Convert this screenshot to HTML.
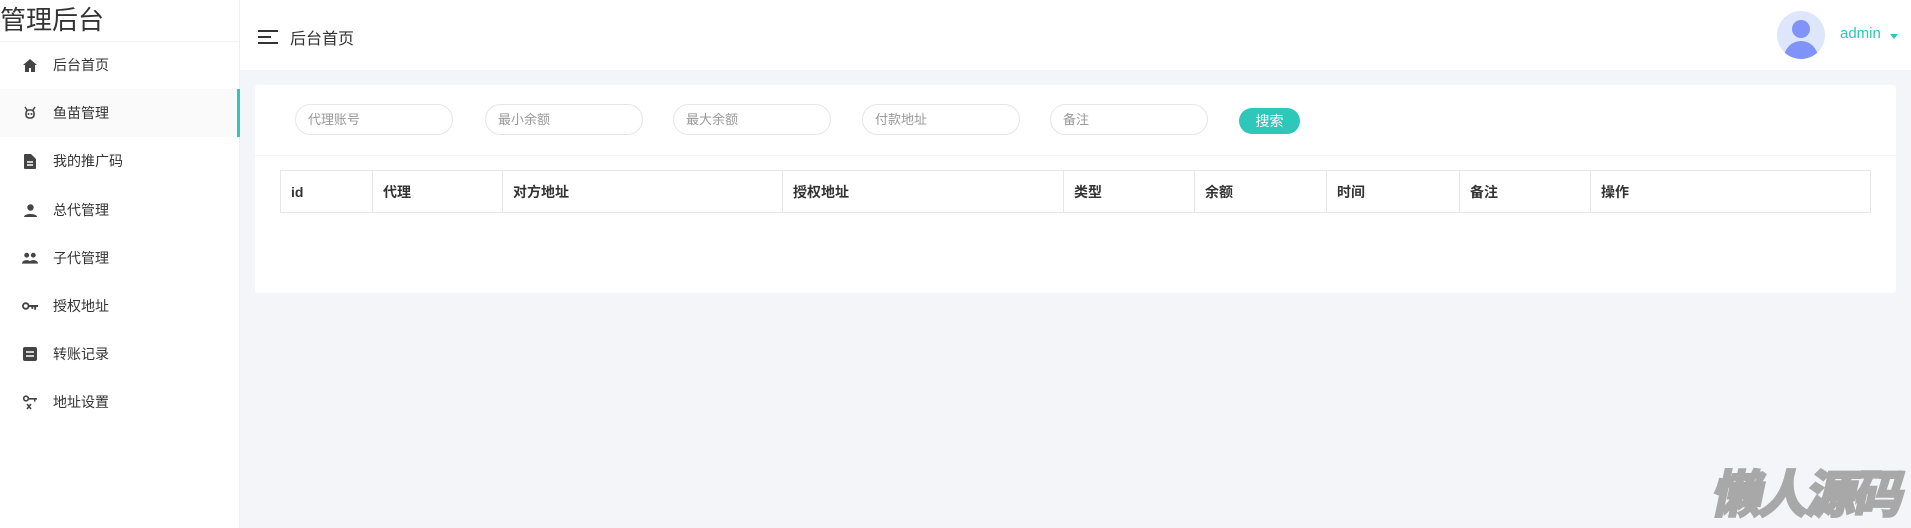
<!DOCTYPE html>
<html><head><meta charset="utf-8"><style>
*{margin:0;padding:0;box-sizing:border-box}
body{width:1911px;height:528px;overflow:hidden;background:#f4f5f9;font-family:"Liberation Sans","Noto Sans CJK SC",sans-serif;position:relative;color:#333}
.side{position:absolute;left:0;top:0;width:240px;height:528px;background:#fff;border-right:1px solid #eee}
.logo{height:42px;font-size:26px;line-height:40px;color:#333;border-bottom:1px solid #f2f2f2}
.item{position:absolute;left:0;width:240px;height:48px;display:flex;align-items:center;font-size:14px;color:#333}
.item .ic{width:16px;height:16px;margin-left:22px;margin-right:15px;display:flex;align-items:center;justify-content:center}
.item.act{background:#fafafa;border-right:3px solid #2ec7b9}
.head{position:absolute;left:240px;top:0;right:0;height:70px;background:#fff}
.card{position:absolute;left:255px;top:85px;width:1641px;height:208px;background:#fff;border-radius:3px}
.inp{position:absolute;top:19px;width:158px;height:31px;border:1px solid #e6e6e6;border-radius:16px;font-size:13px;color:#999;line-height:29px;padding-left:12px}
.btn{position:absolute;left:984px;top:23px;width:61px;height:26px;background:#2ec7b9;border-radius:13px;color:#fff;font-size:14px;line-height:26px;text-align:center}
table{position:absolute;left:25px;top:85px;border-collapse:collapse;width:1591px}
td{border:1px solid #e6e6e6;height:42px;font-size:14px;font-weight:bold;padding-left:10px;color:#333}
</style></head><body>
<div class="side">
<div class="logo">管理后台</div>
<div class="item" style="top:41px"><span class="ic"><svg width="14" height="13" viewBox="0 0 14 13"><path d="M7 0L0 6h2v7h4V9h2v4h4V6h2z" fill="#444"/></svg></span>后台首页</div>
<div class="item act" style="top:89px"><span class="ic"><svg width="14" height="14" viewBox="0 0 14 14"><path d="M2 1l2 3M12 1l-2 3" stroke="#444" stroke-width="1.5"/><rect x="3" y="4" width="8" height="8" rx="3" fill="none" stroke="#444" stroke-width="1.6"/><circle cx="5.5" cy="8" r="1" fill="#444"/><circle cx="8.5" cy="8" r="1" fill="#444"/></svg></span>鱼苗管理</div>
<div class="item" style="top:137px"><span class="ic"><svg width="12" height="15" viewBox="0 0 12 15"><path d="M0 1a1 1 0 011-1h6l5 5v9a1 1 0 01-1 1H1a1 1 0 01-1-1z" fill="#444"/><path d="M3 8h6M3 11h6" stroke="#fff" stroke-width="1.4"/></svg></span>我的推广码</div>
<div class="item" style="top:186px"><span class="ic"><svg width="13" height="13" viewBox="0 0 13 13"><circle cx="6.5" cy="3.5" r="3.2" fill="#444"/><path d="M0 13c0-4 13-4 13 0z" fill="#444"/></svg></span>总代管理</div>
<div class="item" style="top:234px"><span class="ic"><svg width="17" height="12" viewBox="0 0 17 12"><circle cx="5" cy="3" r="2.6" fill="#444"/><circle cx="12" cy="3" r="2.6" fill="#444"/><path d="M0 12c0-5 10-5 10 0zM7 12c0-5 10-5 10 0z" fill="#444"/></svg></span>子代管理</div>
<div class="item" style="top:282px"><span class="ic"><svg width="17" height="10" viewBox="0 0 17 10"><circle cx="4" cy="5" r="3" fill="none" stroke="#444" stroke-width="2"/><path d="M7 4h10v2h-2v3h-2V6h-1v2h-2V6H7z" fill="#444"/></svg></span>授权地址</div>
<div class="item" style="top:330px"><span class="ic"><svg width="14" height="14" viewBox="0 0 14 14"><rect width="14" height="14" rx="2" fill="#444"/><path d="M3 5h8M3 9h8" stroke="#fff" stroke-width="1.6"/></svg></span>转账记录</div>
<div class="item" style="top:378px"><span class="ic"><svg width="16" height="15" viewBox="0 0 16 15"><circle cx="4" cy="3.5" r="2.3" fill="none" stroke="#444" stroke-width="1.6"/><path d="M6 3h9v1.6h-1.5v2h-1.5v-2H6z" fill="#444"/><path d="M5 9l4 5M9 9l-4 5" stroke="#444" stroke-width="1.5"/></svg></span>地址设置</div>
</div>
<div class="head">
<svg style="position:absolute;left:18px;top:30px" width="20" height="14" viewBox="0 0 20 14"><path d="M0 1h20M0 7h13M0 13h20" stroke="#333" stroke-width="2"/></svg>
<div style="position:absolute;left:50px;top:25px;font-size:16px;color:#333">后台首页</div>
<div style="position:absolute;left:1537px;top:11px;width:48px;height:48px;border-radius:50%;background:#dde6fb;overflow:hidden"><div style="position:absolute;left:15px;top:9px;width:18px;height:18px;border-radius:50%;background:#7f93fb"></div><div style="position:absolute;left:7px;top:30px;width:34px;height:24px;border-radius:17px 17px 0 0;background:#7f93fb"></div></div>
<div style="position:absolute;left:1600px;top:25px;font-size:15px;color:#2ec7b9">admin</div>
<div style="position:absolute;left:1650px;top:34px;border:4px solid transparent;border-top:5px solid #2ec7b9"></div>
</div>
<div class="card">
<div class="inp" style="left:40px">代理账号</div>
<div class="inp" style="left:230px">最小余额</div>
<div class="inp" style="left:418px">最大余额</div>
<div class="inp" style="left:607px">付款地址</div>
<div class="inp" style="left:795px">备注</div>
<div class="btn">搜索</div>
<div style="position:absolute;left:0;right:0;top:70px;border-top:1px solid #f3f3f3"></div>
<table><tr><td style="width:92px">id</td><td style="width:130px">代理</td><td style="width:280px">对方地址</td><td style="width:281px">授权地址</td><td style="width:131px">类型</td><td style="width:132px">余额</td><td style="width:133px">时间</td><td style="width:131px">备注</td><td>操作</td></tr></table>
</div>
<div style="position:absolute;left:1715px;top:464px;font-size:50px;font-weight:bold;color:#a8a8a8;letter-spacing:-3px;-webkit-text-stroke:3px #a8a8a8;text-shadow:0 0 2px #fff,1px 1px 0 #eee,-1px -1px 0 #eee;transform:skewX(-12deg);font-family:'Noto Sans CJK SC',sans-serif;line-height:54px">懒人源码</div>
</body></html>
